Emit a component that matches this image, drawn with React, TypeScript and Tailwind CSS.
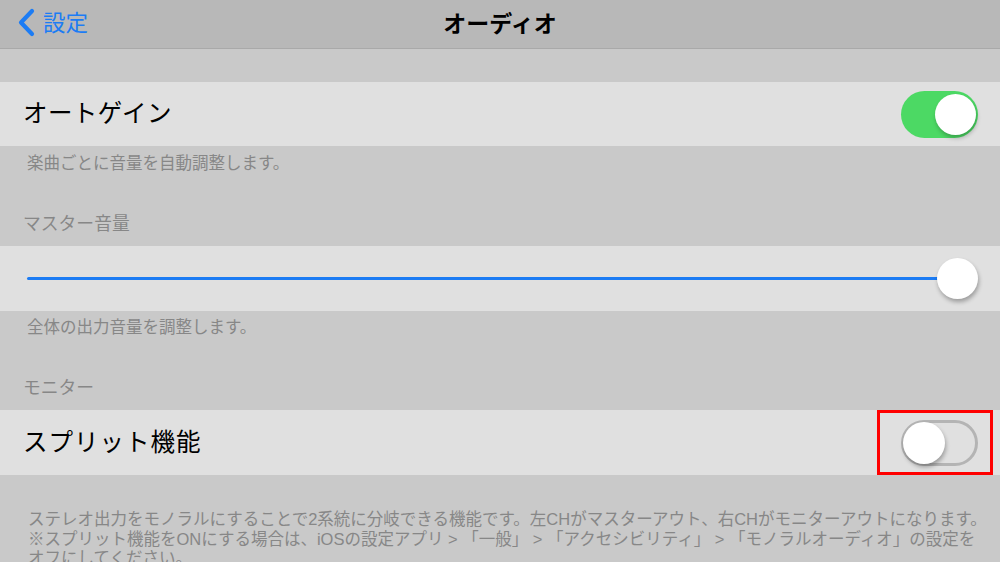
import React from "react";

const font = { fontFamily: '"Liberation Sans", "Noto Sans CJK JP", "Noto Sans", sans-serif' };

function ToggleOn() {
  return (
    <div className="relative h-[47px] w-[77px] rounded-full bg-[#4cd964]">
      <div className="absolute right-[2px] top-[3px] h-[41px] w-[41px] rounded-full bg-white shadow-[1px_3px_4px_rgba(0,0,0,0.25)]" />
    </div>
  );
}

function ToggleOff() {
  return (
    <div className="relative h-[46px] w-[77px] rounded-full border-[3px] border-[#b4b4b4] bg-[#e0e0e0]">
      <div className="absolute left-[-1px] top-[-1px] h-[42px] w-[42px] rounded-full bg-white shadow-[1px_3px_4px_rgba(0,0,0,0.3)]" />
    </div>
  );
}

export default function App() {
  return (
    <div className="h-[562px] w-[1000px] overflow-hidden bg-[#c9c9c9]" style={font}>
      {/* Nav bar */}
      <div className="relative flex h-[49px] items-center border-b border-[#a9a9a9] bg-[#b8b8b8]">
        <div className="flex items-center pl-[17px]">
          <svg width="19" height="30" viewBox="0 0 19 30" className="mt-[-3px]">
            <path d="M15 3 L4 14.5 L15 26" fill="none" stroke="#1c7cf4" strokeWidth="4.2" strokeLinecap="round" strokeLinejoin="round" />
          </svg>
          <span className="ml-[7px] mt-[-1px] text-[22.5px] leading-[26px] text-[#1c7cf4]">設定</span>
        </div>
        <div className="absolute inset-x-0 top-0 flex h-[48px] items-center justify-center pb-[1px]">
          <span className="text-[23px] font-bold leading-[26px] text-black">オーディオ</span>
        </div>
      </div>

      <div className="h-[33px]" />

      {/* Auto gain row */}
      <div className="flex h-[64px] items-center justify-between bg-[#e0e0e0] pl-[23px] pr-[22px]">
        <span className="text-[24.5px] leading-[30px] tracking-[0.4px] text-black">オートゲイン</span>
        <ToggleOn />
      </div>

      <div className="pt-[7px] pb-[12px]">
        <div className="pl-[27px] text-[16.5px] leading-[20px] text-[#878787]">楽曲ごとに音量を自動調整します。</div>
        <div className="mt-[41px] pl-[23px] text-[17.8px] leading-[20px] text-[#878787]">マスター音量</div>
      </div>

      {/* Slider row */}
      <div className="flex h-[65px] items-center bg-[#e0e0e0] pl-[27px] pr-[22px]">
        <div className="h-[3px] flex-1 rounded-l-full bg-[#1c7cf4]" />
        <div className="ml-[-10px] h-[41px] w-[41px] rounded-full bg-white shadow-[1px_3px_4px_rgba(0,0,0,0.3)]" />
      </div>

      <div className="pt-[6px] pb-[12px]">
        <div className="pl-[27px] text-[16.5px] leading-[20px] text-[#878787]">全体の出力音量を調整します。</div>
        <div className="mt-[41px] pl-[23px] text-[17.8px] leading-[20px] text-[#878787]">モニター</div>
      </div>

      {/* Split row */}
      <div className="flex h-[65px] items-center justify-between bg-[#e0e0e0] pl-[23px] pr-[7px]">
        <span className="text-[24.5px] leading-[30px] tracking-[1px] text-black">スプリット機能</span>
        <div className="flex h-[65px] w-[116px] items-center border-[3px] border-[#ff0000] pl-[21px]">
          <ToggleOff />
        </div>
      </div>

      <div className="pt-[35px] pl-[28px] text-[16.5px] leading-[19.5px] text-[#878787]">
        <div className="whitespace-nowrap">ステレオ出力をモノラルにすることで2系統に分岐できる機能です。左CHがマスターアウト、右CHがモニターアウトになります。</div>
        <div className="whitespace-nowrap">※スプリット機能をONにする場合は、iOSの設定アプリ &gt; 「一般」 &gt; 「アクセシビリティ」 &gt; 「モノラルオーディオ」の設定を</div>
        <div className="whitespace-nowrap">オフにしてください。</div>
      </div>
    </div>
  );
}
